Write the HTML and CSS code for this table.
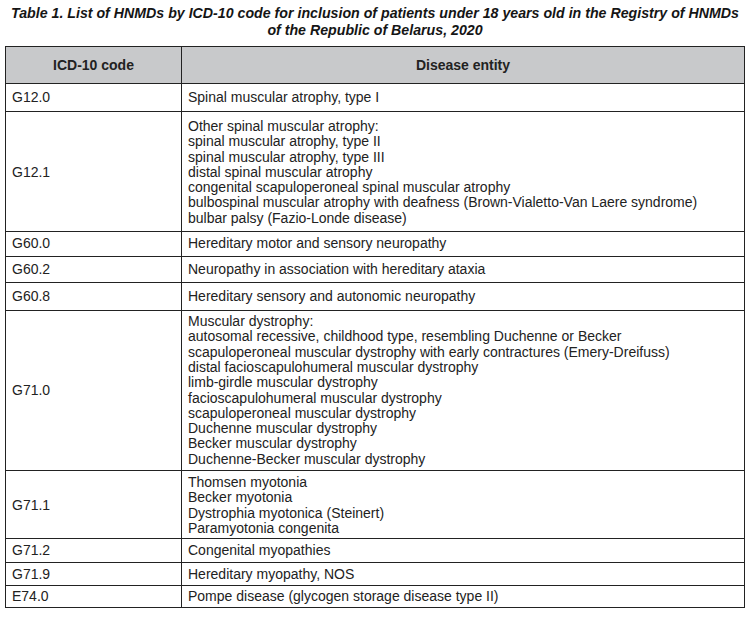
FILE: index.html
```html
<!DOCTYPE html>
<html>
<head>
<meta charset="utf-8">
<link rel="stylesheet" href="styles.css">
</head>
<body>
<div class="page">
  <h1 class="title">Table 1. List of HNMDs by ICD-10 code for inclusion of patients under 18 years old in the Registry of HNMDs<br>of the Republic of Belarus, 2020</h1>
  <table class="grid">
    <thead>
      <tr class="head">
        <th class="c-code">ICD-10 code</th>
        <th class="c-name">Disease entity</th>
      </tr>
    </thead>
    <tbody>
      <tr class="h28"><td>G12.0</td><td>Spinal muscular atrophy, type I</td></tr>
      <tr class="m-sma"><td>G12.1</td><td>Other spinal muscular atrophy:<br>spinal muscular atrophy, type II<br>spinal muscular atrophy, type III<br>distal spinal muscular atrophy<br>congenital scapuloperoneal spinal muscular atrophy<br>bulbospinal muscular atrophy with deafness (Brown-Vialetto-Van Laere syndrome)<br>bulbar palsy (Fazio-Londe disease)</td></tr>
      <tr class="h25"><td>G60.0</td><td>Hereditary motor and sensory neuropathy</td></tr>
      <tr class="h26"><td>G60.2</td><td>Neuropathy in association with hereditary ataxia</td></tr>
      <tr class="h28"><td>G60.8</td><td>Hereditary sensory and autonomic neuropathy</td></tr>
      <tr class="m-dys"><td>G71.0</td><td>Muscular dystrophy:<br>autosomal recessive, childhood type, resembling Duchenne or Becker<br>scapuloperoneal muscular dystrophy with early contractures (Emery-Dreifuss)<br>distal facioscapulohumeral muscular dystrophy<br>limb-girdle muscular dystrophy<br>facioscapulohumeral muscular dystrophy<br>scapuloperoneal muscular dystrophy<br>Duchenne muscular dystrophy<br>Becker muscular dystrophy<br>Duchenne-Becker muscular dystrophy</td></tr>
      <tr class="m-myo"><td>G71.1</td><td>Thomsen myotonia<br>Becker myotonia<br>Dystrophia myotonica (Steinert)<br>Paramyotonia congenita</td></tr>
      <tr class="h24"><td>G71.2</td><td>Congenital myopathies</td></tr>
      <tr class="h23"><td>G71.9</td><td>Hereditary myopathy, NOS</td></tr>
      <tr class="h22"><td>E74.0</td><td>Pompe disease (glycogen storage disease type II)</td></tr>
    </tbody>
  </table>
</div>
</body>
</html>
```

FILE: styles.css
```css
html, body {
  margin: 0;
  padding: 0;
  background: #ffffff;
}

.page {
  padding: 5px 4px 0 5px;
  font-family: "Liberation Sans", Arial, sans-serif;
  color: #222222;
}

.title {
  margin: 0 0 7px 0;
  font-size: 14.2px;
  line-height: 17px;
  font-weight: bold;
  font-style: italic;
  text-align: center;
  color: #151515;
}

.grid {
  width: 740px;
  border-collapse: collapse;
  font-size: 14px;
  line-height: 15.3px;
}

.grid th,
.grid td {
  border: 1px solid #222222;
  padding: 0 6px;
  text-align: left;
  vertical-align: middle;
}

.grid .c-code {
  width: 163px;
}

.head th {
  background: #c8c9cb;
  font-weight: bold;
  text-align: center;
  height: 34px;
  padding-top: 2px;
  padding-bottom: 0;
}

.h22 td { height: 21px; }
.h23 td { height: 22px; }
.h24 td { height: 23px; }
.h25 td { height: 24px; }
.h26 td { height: 25px; }
.h28 td { height: 27px; }

.m-sma td {
  padding-top: 7px;
  padding-bottom: 5px;
}

.m-dys td {
  padding-top: 3px;
  padding-bottom: 3px;
}

.m-myo td {
  padding-top: 4px;
  padding-bottom: 2px;
}
```
